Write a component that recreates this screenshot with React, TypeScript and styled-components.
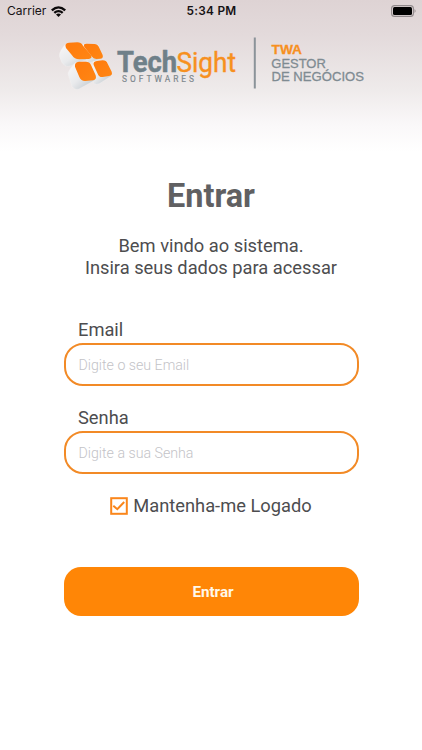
import React, { useState } from "react";
import styled, { createGlobalStyle } from "styled-components";

const ORANGE = "#ff8606";

const GlobalStyle = createGlobalStyle`
  *, *::before, *::after { box-sizing: border-box; }
  body { margin: 0; background: #fff; overflow: hidden; }
`;

const Screen = styled.div`
  display: flex;
  flex-direction: column;
  width: 422px;
  height: 750px;
  background: linear-gradient(180deg, #ded3d4 0, #e3dadb 35px, #eeeaea 88px, #faf8f9 125px, #ffffff 152px);
  font-family: Roboto, "Liberation Sans", sans-serif;
  color: #4d4d4f;
`;

const StatusBar = styled.header`
  display: grid;
  grid-template-columns: 1fr auto 1fr;
  align-items: center;
  height: 22px;
  padding: 0 6px 0 7px;
  font: 500 11.5px/22px Inter, sans-serif;
  color: #161214;
`;

const Carrier = styled.span`
  display: flex;
  align-items: center;
  gap: 5px;
  font-weight: 400;
  font-size: 12px;
`;

const Clock = styled.time`
  font-weight: 600;
  font-size: 11.8px;
  letter-spacing: 0.3px;
`;

const BatteryIcon = styled.svg`
  justify-self: end;
  margin-bottom: 1px;
`;

const Brand = styled.svg`
  display: block;
  width: 312px;
  height: 60px;
  margin: 12px 0 0 56px;
`;

const Main = styled.main`
  display: flex;
  flex-direction: column;
  width: 295px;
  margin: 80px 0 0 63.5px;
`;

const Title = styled.h1`
  margin: 0;
  font-size: 32.4px;
  font-weight: 700;
  line-height: 44px;
  text-align: center;
  color: #606062;
`;

const Intro = styled.p`
  margin: 17px 0 0;
  font-size: 18.3px;
  line-height: 22px;
  text-align: center;
`;

const Form = styled.form`
  display: flex;
  flex-direction: column;
  margin-top: 39px;
`;

const Field = styled.label`
  display: flex;
  flex-direction: column;
  height: 88px;
  font-size: 18.3px;
  line-height: 24px;
`;

const Caption = styled.span`
  padding-left: 14.5px;
`;

const Input = styled.input`
  width: 100%;
  height: 43px;
  margin-top: 1.4px;
  padding: 1px 13px 0;
  border: 2px solid #f28a26;
  border-radius: 19px;
  outline: none;
  background: #fff;
  font: 300 14.2px/20px Roboto, sans-serif;
  color: #4d4d4f;
  &::placeholder { color: #c3c3c7; opacity: 1; }
`;

const Remember = styled.label`
  display: flex;
  align-items: center;
  align-self: center;
  gap: 5px;
  height: 24px;
  font-size: 18.3px;
  line-height: 24px;
`;

const HiddenCheck = styled.input`
  position: absolute;
  opacity: 0;
  pointer-events: none;
`;

const Submit = styled.button`
  height: 49px;
  margin-top: 49px;
  padding: 1px 0 0 4px;
  border: 0;
  border-radius: 17px;
  background: ${ORANGE};
  color: #fff8ea;
  font: 700 15.2px/20px Roboto, sans-serif;
`;

function Logo() {
  return (
    <Brand viewBox="56 34 312 60" role="img" aria-label="TechSight Softwares">
      <defs>
        <linearGradient id="side" x1="0" y1="0" x2="1" y2="1">
          <stop offset="0" stopColor="#f8f7f8" />
          <stop offset="0.5" stopColor="#e9eaec" />
          <stop offset="1" stopColor="#b9c2c8" />
        </linearGradient>
        <linearGradient id="face" x1="0" y1="0" x2="1" y2="1">
          <stop offset="0" stopColor="#ff7a0c" />
          <stop offset="1" stopColor="#ff8614" />
        </linearGradient>
      </defs>
      <g transform="translate(50 30) scale(.33333)">
        <g fill="url(#side)" stroke="#f6f4f4" strokeWidth="1">
          <path d="M47 42Q28 63 28 77Q34 101 45 107Q54 113 75 101L124 84L96 42Z" />
          <path d="M101 42L94 62L116 100L158 84L145 45Z" />
          <path d="M130 95L122 130L130 160Q140 166 150 160L184 138L171 94Z" />
          <path d="M76 98Q54 122 54 132L66 169Q73 181 87 177L134 151L124 101Z" />
        </g>
        <g fill="url(#face)">
          <path d="M57 38L82 37Q93 37 99 47L121 73Q130 85 117 87L88 88Q73 88 66 76L48 54Q42 39 57 38Z" />
          <path d="M110 41L133 42Q144 43 147 52L158 75Q161 86 150 86L139 87Q130 87 125 79L103 51Q98 41 110 41Z" />
          <path d="M87 95L107 95Q119 95 123 105L137 136Q141 149 129 151L105 153Q93 153 88 141L75 110Q73 97 87 95Z" />
          <path d="M141 93L158 91Q169 91 173 101L185 125Q189 136 177 138L158 141Q147 142 143 131L131 105Q128 95 141 93Z" />
        </g>
      </g>
      <g fontFamily="Roboto, sans-serif">
        <text x="117" y="72.3" fontSize="29" fontWeight="700" fill="#6f8089" stroke="#6f8089" strokeWidth=".5" textLength="60" lengthAdjust="spacingAndGlyphs">Tech</text>
        <text x="176.5" y="72.3" fontSize="28.5" fill="#f7901f" stroke="#f7901f" strokeWidth=".4" textLength="59.5" lengthAdjust="spacingAndGlyphs">Sight</text>
        <text x="122" y="82.2" fontSize="8.4" fill="#7c868c" stroke="#7c868c" strokeWidth=".15" textLength="72">SOFTWARES</text>
      </g>
      <rect x="253.8" y="37.5" width="2" height="51" fill="#8b9399" />
      <g fontFamily="Liberation Sans, sans-serif" fontSize="13.5" fill="#7f8b92" stroke="#7f8b92" strokeWidth=".3">
        <text x="271.5" y="54.2" fontWeight="700" fill="#f7901f" stroke="#f7901f" textLength="30.5" lengthAdjust="spacingAndGlyphs">TWA</text>
        <text x="271.3" y="67.8" textLength="54.5" lengthAdjust="spacingAndGlyphs">GESTOR</text>
        <text x="271.5" y="81.4" textLength="92.5" lengthAdjust="spacingAndGlyphs">DE NEGÓCIOS</text>
      </g>
    </Brand>
  );
}

function Wifi() {
  return (
    <svg width="15" height="11" viewBox="0 0 15 11" fill="#0c090a">
      <path d="M0 3.6Q7.5-3.1 15 3.6L13.4 5.2Q7.5 0 1.6 5.2Z" />
      <path d="M2.5 6.1Q7.5 1.8 12.5 6.1L10.9 7.7Q7.5 4.9 4.1 7.7Z" />
      <path d="M5 8.6Q7.5 6.5 10 8.6L7.5 11Z" />
    </svg>
  );
}

function Battery() {
  return (
    <BatteryIcon width="25" height="12" viewBox="0 0 25 12">
      <rect x=".6" y=".6" width="21.8" height="10.8" rx="3" fill="none" stroke="#918a8c" strokeWidth="1.1" />
      <rect x="2" y="2" width="19" height="8" rx="1.5" fill="#000" />
      <path d="M23.6 4Q25.4 6 23.6 8Z" fill="#81797b" />
    </BatteryIcon>
  );
}

function CheckMark({ checked }: { checked: boolean }) {
  return (
    <svg width="18" height="18" viewBox="0 0 18 18" fill="none" stroke="#fa861b" strokeWidth="2">
      <rect x="1.2" y="1.2" width="15.6" height="15.6" />
      {checked && <path d="M3.3 8.7L7.3 12.2L14.2 5" />}
    </svg>
  );
}

export default function App() {
  const [remember, setRemember] = useState(true);
  return (
    <>
      <GlobalStyle />
      <Screen>
        <StatusBar>
          <Carrier>Carrier <Wifi /></Carrier>
          <Clock>5:34 PM</Clock>
          <Battery />
        </StatusBar>
        <Logo />
        <Main>
          <Title>Entrar</Title>
          <Intro>Bem vindo ao sistema.<br />Insira seus dados para acessar</Intro>
          <Form onSubmit={(e) => e.preventDefault()}>
            <Field>
              <Caption>Email</Caption>
              <Input type="email" placeholder="Digite o seu Email" />
            </Field>
            <Field>
              <Caption>Senha</Caption>
              <Input type="password" placeholder="Digite a sua Senha" />
            </Field>
            <Remember>
              <HiddenCheck type="checkbox" checked={remember} onChange={(e) => setRemember(e.target.checked)} />
              <CheckMark checked={remember} />
              Mantenha-me Logado
            </Remember>
            <Submit type="submit">Entrar</Submit>
          </Form>
        </Main>
      </Screen>
    </>
  );
}
